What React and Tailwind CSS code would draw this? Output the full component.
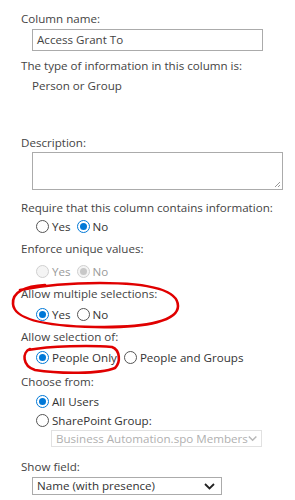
import React from 'react';

const font = { fontFamily: '"Open Sans", "Noto Sans", sans-serif' };

function Radio({ checked, disabled }) {
  if (disabled) {
    return (
      <span className="w-[13px] h-[13px] rounded-full border border-[#d0d0d0] bg-[#f4f4f4] flex items-center justify-center shrink-0">
        {checked && <span className="w-[7px] h-[7px] rounded-full bg-[#c8c8c8]" />}
      </span>
    );
  }
  if (checked) {
    return (
      <span className="w-[13px] h-[13px] rounded-full border border-[#0078d7] bg-white flex items-center justify-center shrink-0">
        <span className="w-[7px] h-[7px] rounded-full bg-[#0078d7]" />
      </span>
    );
  }
  return <span className="w-[13px] h-[13px] rounded-full border border-[#555] bg-white shrink-0" />;
}

function Option({ label, checked, disabled }) {
  return (
    <span className="flex items-center gap-[3px]">
      <Radio checked={checked} disabled={disabled} />
      <span className={disabled ? 'text-[#9a9a9a]' : 'text-[#333]'}>{label}</span>
    </span>
  );
}

function Chevron({ color }) {
  return (
    <svg width="11" height="7" viewBox="0 0 11 7">
      <path d="M1 1 L5.5 5.5 L10 1" fill="none" stroke={color} strokeWidth="1.8" />
    </svg>
  );
}

export default function App() {
  return (
    <div className="relative w-[295px] h-[500px] bg-white overflow-hidden text-[11.6px] text-[#444]" style={font}>
      <div className="flex flex-col pl-[21px] pt-[9px]">
        <div className="h-[20px] flex items-center">Column name:</div>
        <div className="ml-[11px] w-[231px] h-[22px] border border-[#ababab] flex items-center pl-[4px] text-[#444]">
          Access Grant To
        </div>
        <div className="mt-[5px] h-[20px] flex items-center">The type of information in this column is:</div>
        <div className="ml-[11px] h-[20px] flex items-center">Person or Group</div>

        <div className="mt-[38px] h-[18px] flex items-center">Description:</div>
        <div className="ml-[11px] w-[251px] h-[38px] border border-[#ababab] relative">
          <svg className="absolute right-[1px] bottom-[1px]" width="8" height="8" viewBox="0 0 8 8">
            <path d="M7 2 L2 7 M7 5 L5 7" stroke="#999" strokeWidth="1" />
          </svg>
        </div>

        <div className="mt-[8px] h-[19px] flex items-center">Require that this column contains information:</div>
        <div className="ml-[15px] h-[20px] flex items-center gap-[6px]">
          <Option label="Yes" />
          <Option label="No" checked />
        </div>

        <div className="mt-[2px] h-[20px] flex items-center">Enforce unique values:</div>
        <div className="mt-[3px] ml-[15px] h-[20px] flex items-center gap-[6px]">
          <Option label="Yes" disabled />
          <Option label="No" checked disabled />
        </div>

        <div className="mt-[2px] h-[20px] flex items-center">Allow multiple selections:</div>
        <div className="mt-[1px] ml-[15px] h-[20px] flex items-center gap-[6px]">
          <Option label="Yes" checked />
          <Option label="No" />
        </div>

        <div className="mt-[2px] h-[20px] flex items-center">Allow selection of:</div>
        <div className="mt-[1px] ml-[15px] h-[20px] flex items-center gap-[7px]">
          <Option label="People Only" checked />
          <Option label="People and Groups" />
        </div>

        <div className="mt-[4px] h-[20px] flex items-center">Choose from:</div>
        <div className="ml-[15px] h-[20px] flex items-center">
          <Option label="All Users" checked />
        </div>
        <div className="ml-[15px] h-[18px] flex items-center">
          <Option label="SharePoint Group:" />
        </div>
        <div className="ml-[30px] w-[211px] h-[17px] border border-[#e1e1e1] flex items-center justify-between pl-[4px] pr-[4px] text-[#b0b0b0]">
          <span className="whitespace-nowrap">Business Automation.spo Members</span>
          <Chevron color="#b8b8b8" />
        </div>

        <div className="mt-[10px] h-[20px] flex items-center">Show field:</div>
        <div className="ml-[11px] w-[190px] h-[18px] border border-[#ababab] flex items-center justify-between pl-[4px] pr-[6px] text-[#333]">
          <span className="whitespace-nowrap">Name (with presence)</span>
          <Chevron color="#222" />
        </div>
      </div>

      <svg className="absolute inset-0 pointer-events-none" width="295" height="500" viewBox="0 0 295 500">
        <path
          d="M45 285 C25 286 12 292 13 304 C14 318 40 326 95 327 C150 328 178 320 178 306 C178 290 150 283 100 283 C70 283 40 286 20 290"
          fill="none" stroke="#e00000" strokeWidth="2.6" strokeLinecap="round"
        />
        <path
          d="M30 349 C22 352 22 366 35 370 C60 374 100 374 115 368 C121 362 120 350 112 347 C90 345 50 346 28 350"
          fill="none" stroke="#e00000" strokeWidth="2.6" strokeLinecap="round"
        />
      </svg>
    </div>
  );
}
